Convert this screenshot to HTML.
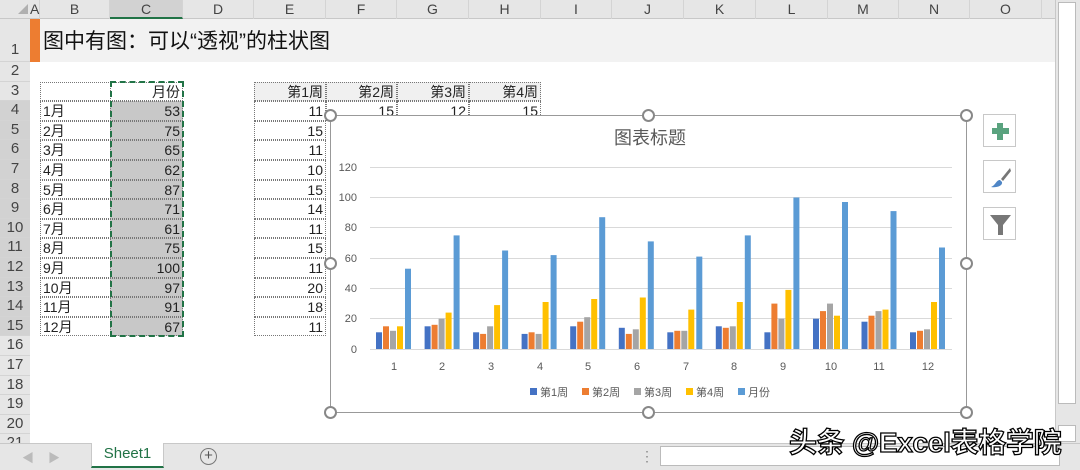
<!DOCTYPE html>
<html><head><meta charset="utf-8"><style>
*{margin:0;padding:0;box-sizing:border-box}
body{width:1080px;height:470px;overflow:hidden;background:#fff;font-family:"Liberation Sans","Noto Sans CJK SC",sans-serif;position:relative;color:#222}
.a{position:absolute}
.ch{position:absolute;top:0;height:19px;font-size:14px;color:#444;text-align:center;line-height:19px;border-right:1px solid #d4d4d4}
.rh{position:absolute;left:0;width:30px;font-size:15px;color:#444;text-align:center;border-bottom:1px solid #d4d4d4;background:#e6e6e6}
.c{position:absolute;font-size:14px;height:19.6px;line-height:19.6px;border:1px dotted #777;padding:0 2px;white-space:nowrap;overflow:hidden}
.r{text-align:right}
.hd{position:absolute;width:10px;height:10px;border:2px solid #888;border-radius:50%;background:#fff}
.btn{position:absolute;left:983px;width:33px;height:33px;border:1px solid #c8c8c8;background:#fff}
</style></head><body>
<div class="a" style="left:0;top:0;width:1080px;height:19px;background:#e6e6e6;border-bottom:1px solid #c8c8c8"></div>
<div class="a" style="left:18px;top:4px;width:0;height:0;border-left:10px solid transparent;border-bottom:10px solid #b0b0b0"></div>
<div class="ch" style="left:30px;width:10px">A</div>
<div class="ch" style="left:40px;width:70px">B</div>
<div class="ch" style="left:110px;width:73px;background:#d2d2d2;border-bottom:2px solid #217346">C</div>
<div class="ch" style="left:183px;width:71px">D</div>
<div class="ch" style="left:254px;width:72px">E</div>
<div class="ch" style="left:326px;width:71px">F</div>
<div class="ch" style="left:397px;width:72px">G</div>
<div class="ch" style="left:469px;width:72px">H</div>
<div class="ch" style="left:541px;width:71px">I</div>
<div class="ch" style="left:612px;width:72px">J</div>
<div class="ch" style="left:684px;width:72px">K</div>
<div class="ch" style="left:756px;width:72px">L</div>
<div class="ch" style="left:828px;width:71px">M</div>
<div class="ch" style="left:899px;width:71px">N</div>
<div class="ch" style="left:970px;width:72px">O</div>
<div class="a" style="left:0;top:19px;width:30px;height:425px;background:#e6e6e6;border-right:1px solid #c8c8c8"></div>
<div class="rh" style="top:19px;height:43px;line-height:62px">1</div>
<div class="rh" style="top:62px;height:19.6px">2</div>
<div class="rh" style="top:81.6px;height:19.6px">3</div>
<div class="rh" style="top:101.2px;height:19.6px;background:#d2d2d2">4</div>
<div class="rh" style="top:120.8px;height:19.6px;background:#d2d2d2">5</div>
<div class="rh" style="top:140.4px;height:19.6px;background:#d2d2d2">6</div>
<div class="rh" style="top:160px;height:19.6px;background:#d2d2d2">7</div>
<div class="rh" style="top:179.6px;height:19.6px;background:#d2d2d2">8</div>
<div class="rh" style="top:199.2px;height:19.6px;background:#d2d2d2">9</div>
<div class="rh" style="top:218.8px;height:19.6px;background:#d2d2d2">10</div>
<div class="rh" style="top:238.4px;height:19.6px;background:#d2d2d2">11</div>
<div class="rh" style="top:258px;height:19.6px;background:#d2d2d2">12</div>
<div class="rh" style="top:277.6px;height:19.6px;background:#d2d2d2">13</div>
<div class="rh" style="top:297.2px;height:19.6px;background:#d2d2d2">14</div>
<div class="rh" style="top:316.8px;height:19.6px;background:#d2d2d2">15</div>
<div class="rh" style="top:336.4px;height:19.6px">16</div>
<div class="rh" style="top:356px;height:19.6px">17</div>
<div class="rh" style="top:375.6px;height:19.6px">18</div>
<div class="rh" style="top:395.2px;height:19.6px">19</div>
<div class="rh" style="top:414.8px;height:19.6px">20</div>
<div class="rh" style="top:434.4px;height:19.6px">21</div>
<div class="a" style="left:30px;top:19px;width:10px;height:43px;background:#ed7d31"></div>
<div class="a" style="left:40px;top:19px;width:1015px;height:43px;background:#f2f2f2"></div>
<div class="a" style="left:43px;top:25px;font-size:21px;color:#111">图中有图：可以“透视”的柱状图</div>
<div class="c" style="left:40px;top:81.6px;width:71px"></div>
<div class="c r" style="left:110px;top:81.6px;width:73px">月份</div>
<div class="c" style="left:40px;top:101.2px;width:71px">1月</div>
<div class="c" style="left:40px;top:120.8px;width:71px">2月</div>
<div class="c" style="left:40px;top:140.4px;width:71px">3月</div>
<div class="c" style="left:40px;top:160px;width:71px">4月</div>
<div class="c" style="left:40px;top:179.6px;width:71px">5月</div>
<div class="c" style="left:40px;top:199.2px;width:71px">6月</div>
<div class="c" style="left:40px;top:218.8px;width:71px">7月</div>
<div class="c" style="left:40px;top:238.4px;width:71px">8月</div>
<div class="c" style="left:40px;top:258px;width:71px">9月</div>
<div class="c" style="left:40px;top:277.6px;width:71px">10月</div>
<div class="c" style="left:40px;top:297.2px;width:71px">11月</div>
<div class="c" style="left:40px;top:316.8px;width:71px">12月</div>
<div class="a" style="left:110px;top:101.2px;width:73px;height:235px;background:#c8c8c8"></div>
<div class="c r" style="left:110px;top:101.2px;width:73px">53</div>
<div class="c r" style="left:110px;top:120.8px;width:73px">75</div>
<div class="c r" style="left:110px;top:140.4px;width:73px">65</div>
<div class="c r" style="left:110px;top:160px;width:73px">62</div>
<div class="c r" style="left:110px;top:179.6px;width:73px">87</div>
<div class="c r" style="left:110px;top:199.2px;width:73px">71</div>
<div class="c r" style="left:110px;top:218.8px;width:73px">61</div>
<div class="c r" style="left:110px;top:238.4px;width:73px">75</div>
<div class="c r" style="left:110px;top:258px;width:73px">100</div>
<div class="c r" style="left:110px;top:277.6px;width:73px">97</div>
<div class="c r" style="left:110px;top:297.2px;width:73px">91</div>
<div class="c r" style="left:110px;top:316.8px;width:73px">67</div>
<div class="a" style="left:110px;top:81px;width:74px;height:256px;border:2px dashed #217346"></div>
<div class="a" style="left:254px;top:81.6px;width:287px;height:19.6px;background:#f0f0f0"></div>
<div class="c r" style="left:254px;top:81.6px;width:72px">第1周</div>
<div class="c r" style="left:326px;top:81.6px;width:71px">第2周</div>
<div class="c r" style="left:397px;top:81.6px;width:72px">第3周</div>
<div class="c r" style="left:469px;top:81.6px;width:72px">第4周</div>
<div class="c r" style="left:254px;top:101.2px;width:72px">11</div>
<div class="c r" style="left:326px;top:101.2px;width:71px">15</div>
<div class="c r" style="left:397px;top:101.2px;width:72px">12</div>
<div class="c r" style="left:469px;top:101.2px;width:72px">15</div>
<div class="c r" style="left:254px;top:120.8px;width:72px">15</div>
<div class="c r" style="left:254px;top:140.4px;width:72px">11</div>
<div class="c r" style="left:254px;top:160px;width:72px">10</div>
<div class="c r" style="left:254px;top:179.6px;width:72px">15</div>
<div class="c r" style="left:254px;top:199.2px;width:72px">14</div>
<div class="c r" style="left:254px;top:218.8px;width:72px">11</div>
<div class="c r" style="left:254px;top:238.4px;width:72px">15</div>
<div class="c r" style="left:254px;top:258px;width:72px">11</div>
<div class="c r" style="left:254px;top:277.6px;width:72px">20</div>
<div class="c r" style="left:254px;top:297.2px;width:72px">18</div>
<div class="c r" style="left:254px;top:316.8px;width:72px">11</div>
<div class="a" style="left:330px;top:115px;width:637px;height:298px;background:#fff;border:1.5px solid #999"></div>
<svg class="a" style="left:0;top:0" width="1080" height="470">
<g stroke="#d9d9d9" stroke-width="1">
<line x1="370" x2="952" y1="167.5" y2="167.5"/><line x1="370" x2="952" y1="197.5" y2="197.5"/><line x1="370" x2="952" y1="227.5" y2="227.5"/><line x1="370" x2="952" y1="258.5" y2="258.5"/><line x1="370" x2="952" y1="288.5" y2="288.5"/><line x1="370" x2="952" y1="318.5" y2="318.5"/><line x1="370" x2="952" y1="349.5" y2="349.5"/>
</g>
<g font-size="11" fill="#595959" text-anchor="end" font-family="Liberation Sans,sans-serif">
<text x="357" y="171">120</text><text x="357" y="201">100</text><text x="357" y="231">80</text><text x="357" y="262">60</text><text x="357" y="292">40</text><text x="357" y="322">20</text><text x="357" y="353">0</text>
</g>
<g font-size="11" fill="#595959" text-anchor="middle" font-family="Liberation Sans,sans-serif">
<text x="394" y="370">1</text><text x="442" y="370">2</text><text x="491" y="370">3</text><text x="540" y="370">4</text><text x="588" y="370">5</text><text x="637" y="370">6</text><text x="686" y="370">7</text><text x="734" y="370">8</text><text x="783" y="370">9</text><text x="831" y="370">10</text><text x="879" y="370">11</text><text x="928" y="370">12</text>
</g>
<text x="650" y="144" font-size="18" fill="#595959" text-anchor="middle" font-family="Liberation Sans,Noto Sans CJK SC,sans-serif">图表标题</text>
<g font-size="11" fill="#595959" font-family="Liberation Sans,Noto Sans CJK SC,sans-serif">
<rect x="530" y="388" width="7" height="7" fill="#4472c4"/><text x="540" y="396">第1周</text>
<rect x="582" y="388" width="7" height="7" fill="#ed7d31"/><text x="592" y="396">第2周</text>
<rect x="634" y="388" width="7" height="7" fill="#a5a5a5"/><text x="644" y="396">第3周</text>
<rect x="686" y="388" width="7" height="7" fill="#ffc000"/><text x="696" y="396">第4周</text>
<rect x="738" y="388" width="7" height="7" fill="#5b9bd5"/><text x="748" y="396">月份</text>
</g>
<g id="bars"></g>
</svg>
<script>
var d=[[11,15,11,10,15,14,11,15,11,20,18,11],[15,16,10,11,18,10,12,14,30,25,22,12],[12,20,15,10,21,13,12,15,20,30,25,13],[15,24,29,31,33,34,26,31,39,22,26,31],[53,75,65,62,87,71,61,75,100,97,91,67]];
var col=["#4472c4","#ed7d31","#a5a5a5","#ffc000","#5b9bd5"],off=[-18,-11,-4,3,11];
var s="";for(var i=0;i<12;i++){var c=394+i*48.55;for(var k=0;k<5;k++){var h=d[k][i]*1.515;s+='<rect x="'+(c+off[k]).toFixed(1)+'" y="'+(349-h).toFixed(1)+'" width="6" height="'+h.toFixed(1)+'" fill="'+col[k]+'"/>';}}
document.getElementById("bars").innerHTML=s;
</script>
<div class="hd" style="left:324px;top:109px;width:13px;height:13px"></div>
<div class="hd" style="left:642px;top:109px;width:13px;height:13px"></div>
<div class="hd" style="left:960px;top:109px;width:13px;height:13px"></div>
<div class="hd" style="left:324px;top:257px;width:13px;height:13px"></div>
<div class="hd" style="left:960px;top:257px;width:13px;height:13px"></div>
<div class="hd" style="left:324px;top:406px;width:13px;height:13px"></div>
<div class="hd" style="left:642px;top:406px;width:13px;height:13px"></div>
<div class="hd" style="left:960px;top:406px;width:13px;height:13px"></div>
<div class="btn" style="top:114px"><svg width="33" height="33"><rect x="13" y="8" width="6" height="17" fill="#5aa37f"/><rect x="8" y="13" width="17" height="6" fill="#5aa37f"/></svg></div>
<div class="btn" style="top:160px"><svg width="33" height="33"><path d="M26 7 L17 18 L19 20 L27 10Z" fill="#777"/><path d="M16 19 C12 19 12 24 7 26 C12 27 19 25 18 21Z" fill="#4f86c6"/></svg></div>
<div class="btn" style="top:207px"><svg width="33" height="33"><path d="M6 7 H27 L19 17 V27 H14 V17Z" fill="#777"/></svg></div>
<div class="a" style="left:1055px;top:0;width:25px;height:444px;background:#e6e6e6;border-left:1px solid #c8c8c8"></div>
<div class="a" style="left:1058px;top:2px;width:18px;height:402px;background:#fff;border:1px solid #bbb"></div>
<div class="a" style="left:1058px;top:425px;width:18px;height:17px;background:#fff;border:1px solid #bbb"></div>
<div class="a" style="left:0;top:443px;width:1080px;height:27px;background:#e6e6e6;border-top:1px solid #c8c8c8"></div>
<div class="a" style="left:22px;top:449px;font-size:12px;color:#bbb">◀</div>
<div class="a" style="left:48px;top:449px;font-size:12px;color:#bbb">▶</div>
<div class="a" style="left:91px;top:443px;width:73px;height:25px;background:#fff;border-bottom:2px solid #217346;border-left:1px solid #c8c8c8;border-right:1px solid #c8c8c8;color:#217346;font-size:15px;text-align:center;line-height:22px">Sheet1</div>
<div class="a" style="left:200px;top:448px;width:17px;height:17px;border:1.5px solid #777;border-radius:50%;color:#555;font-size:15px;line-height:13px;text-align:center">+</div>
<div class="a" style="left:640px;top:448px;font-size:14px;color:#888">⋮</div>
<div class="a" style="left:660px;top:446px;width:400px;height:20px;background:#fff;border:1px solid #bbb"></div>
<div class="a" style="left:789px;top:421px;font-size:28px;color:#fff;-webkit-text-stroke:1.3px #000;font-weight:bold;letter-spacing:-0.3px">头条 @Excel表格学院</div>
</body></html>
